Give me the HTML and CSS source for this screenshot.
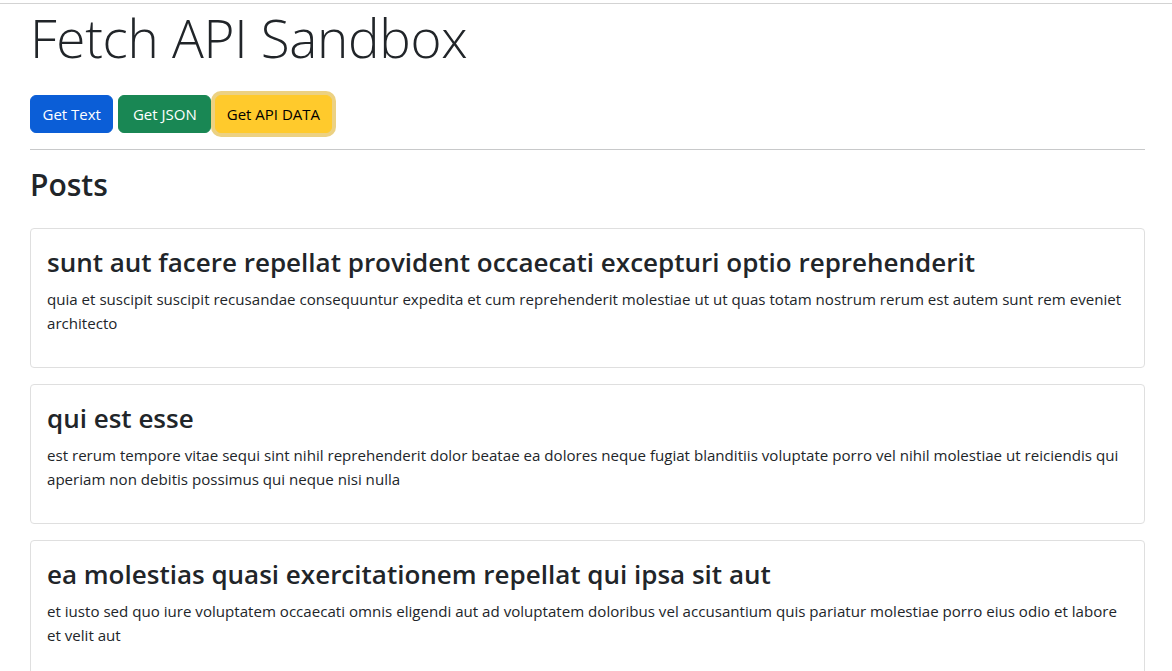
FILE: index.html
```html
<!DOCTYPE html>
<html lang="en">
<head>
<meta charset="utf-8">
<title>Fetch API Sandbox</title>
<link rel="stylesheet" href="styles.css">
</head>
<body>
<div class="topline"></div>
<main class="container">
  <h1 class="title">Fetch API Sandbox</h1>
  <div class="actions">
    <button class="btn btn-primary">Get Text</button>
    <button class="btn btn-success">Get JSON</button>
    <button class="btn btn-warning focused">Get API DATA</button>
  </div>
  <hr class="divider">
  <h2 class="section-title">Posts</h2>
  <div class="posts">
    <div class="card">
      <h3 class="card-title">sunt aut facere repellat provident occaecati excepturi optio reprehenderit</h3>
      <p class="card-text">quia et suscipit suscipit recusandae consequuntur expedita et cum reprehenderit molestiae ut ut quas totam nostrum rerum est autem sunt rem eveniet architecto</p>
    </div>
    <div class="card">
      <h3 class="card-title">qui est esse</h3>
      <p class="card-text">est rerum tempore vitae sequi sint nihil reprehenderit dolor beatae ea dolores neque fugiat blanditiis voluptate porro vel nihil molestiae ut reiciendis qui aperiam non debitis possimus qui neque nisi nulla</p>
    </div>
    <div class="card">
      <h3 class="card-title">ea molestias quasi exercitationem repellat qui ipsa sit aut</h3>
      <p class="card-text">et iusto sed quo iure voluptatem occaecati omnis eligendi aut ad voluptatem doloribus vel accusantium quis pariatur molestiae porro eius odio et labore et velit aut</p>
    </div>
  </div>
</main>
</body>
</html>
```
FILE: styles.css
```css
* { box-sizing: border-box; }
html, body { margin: 0; padding: 0; }
body {
  font-family: "Open Sans", "Noto Sans", sans-serif;
  font-size: 15px;
  line-height: 24px;
  color: #212529;
  background: #fff;
  padding-top: 3px;
}
.topline {
  height: 1px;
  background: #d3d3d3;
}
.container {
  padding: 0 27px 0 30px;
}
.title {
  margin: 0 0 24px;
  padding-top: 1px;
  font-size: 53px;
  font-weight: 300;
  line-height: 66px;
  letter-spacing: -0.3px;
}
.actions {
  display: flex;
  gap: 5px;
}
.btn {
  font-family: inherit;
  font-size: 15px;
  line-height: 24px;
  padding: 6px 11.5px;
  border: 1px solid transparent;
  border-radius: 6px;
  height: 38px;
  cursor: pointer;
}
.btn-primary { background: #0b5ed7; border-color: #0b5ed7; color: #fff; }
.btn-success { background: #198754; border-color: #198754; color: #fff; padding: 6px 13.5px; }
.btn-warning { background: #ffca2c; border-color: #ffca2c; color: #000; margin-left: -1px; padding: 6px 10.5px; }
.focused { box-shadow: 0 0 0 4px rgba(217, 164, 6, 0.5); }
.divider {
  margin: 16px 0;
  border: 0;
  border-top: 1px solid #c8c9ca;
}
.section-title {
  margin: 0 0 24px;
  font-size: 30px;
  font-weight: 600;
  line-height: 38px;
}
.card {
  border: 1px solid #dfdfdf;
  border-radius: 4px;
  padding: 16px;
  margin-bottom: 16px;
}
.card-title {
  margin: 0 0 8px;
  font-size: 26px;
  font-weight: 600;
  line-height: 34px;
}
.card-text {
  margin: 0 0 16px;
  font-size: 15.1px;
}
```
